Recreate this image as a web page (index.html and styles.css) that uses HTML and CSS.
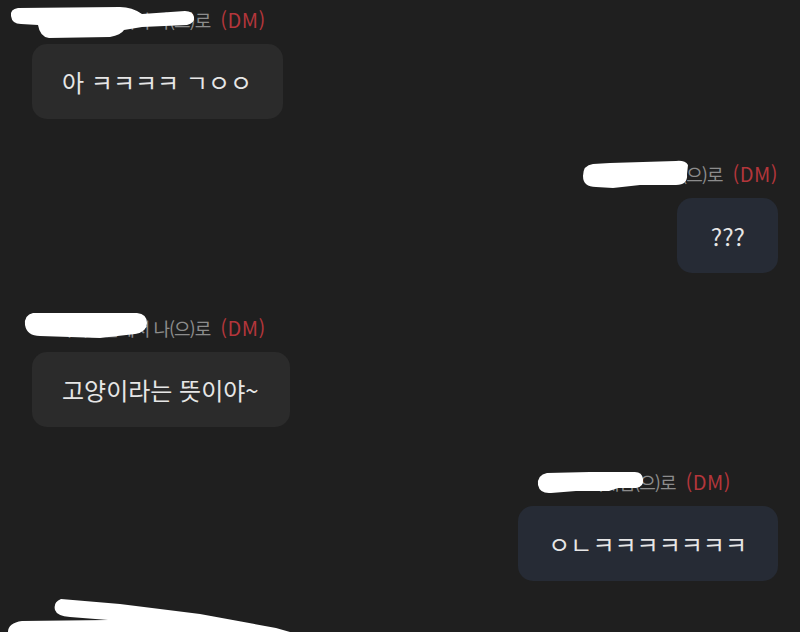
FILE: index.html
```html
<!DOCTYPE html>
<html lang="ko">
<head>
<meta charset="utf-8">
<link rel="stylesheet" href="styles.css">
</head>
<body>
<div class="page">
  <div class="thread">
    <div class="msg left">
      <div class="label"><span class="who">닉네임님께서 나(으)로</span><span class="dm">(DM)</span></div>
      <div class="bubble">아 ㅋㅋㅋㅋ ㄱㅇㅇ</div>
    </div>
    <div class="msg right">
      <div class="label"><span class="who">닉네임(으)로</span><span class="dm">(DM)</span></div>
      <div class="bubble narrow">???</div>
    </div>
    <div class="msg left">
      <div class="label"><span class="who">닉네임님께서 나(으)로</span><span class="dm">(DM)</span></div>
      <div class="bubble">고양이라는 뜻이야~</div>
    </div>
    <div class="msg right">
      <div class="label shifted"><span class="who">닉네임(으)로</span><span class="dm">(DM)</span></div>
      <div class="bubble">ㅇㄴㅋㅋㅋㅋㅋㅋㅋ</div>
    </div>
  </div>
  <svg class="redact" width="800" height="632" viewBox="0 0 800 632" xmlns="http://www.w3.org/2000/svg">
    <g fill="#fff">
      <path d="M18 8 Q10 9 11 16 Q12 24 21 24 L38 25 Q40 37 49 38 L110 37 Q121 35 124 30 L142 27 L187 25 Q195 23 194 17 Q193 11 185 11 L142 14 Q132 7 120 7 Z"/>
      <path d="M593 164 Q583 165 583 176 Q583 187 596 187 L613 188 L640 185 L676 185 Q688 185 687 174 L688 165 Q685 160 676 161 L610 163 Z"/>
      <path d="M33 313 Q24 315 25 325 Q27 336 40 336 L100 338 L135 334 Q147 332 147 323 Q147 314 137 313 L80 313 Z"/>
      <path d="M547 473 Q537 475 538 485 Q540 494 551 493 L576 491 L609 491 L618 488 L636 488 Q644 487 643 479 Q642 471 633 472 L590 472 Z"/>
      <path d="M61 599 Q53 602 55 610 Q57 616 70 617 L108 620 L22 621 Q8 623 8 632 L292 632 L290 632 L276 628 L200 614 L120 604 Z"/>
    </g>
  </svg>
</div>
</body>
</html>
```

FILE: styles.css
```css
html, body {
  margin: 0;
  padding: 0;
  background: #1f1f1f;
}

.page {
  position: relative;
  width: 800px;
  height: 632px;
  overflow: hidden;
  font-family: "Noto Sans CJK KR", "Noto Sans", sans-serif;
}

.thread {
  display: flex;
  flex-direction: column;
  gap: 43px;
  padding: 8px 22px 0 32px;
}

.msg {
  display: flex;
  flex-direction: column;
  gap: 12px;
}

.msg.left {
  align-items: flex-start;
}

.msg.right {
  align-items: flex-end;
}

.label {
  height: 24px;
  line-height: 24px;
  color: #8c8c8c;
  white-space: nowrap;
  display: flex;
  align-items: baseline;
  gap: 10px;
}

.who {
  font-size: 18px;
  letter-spacing: -1px;
}

.dm {
  font-size: 20px;
  letter-spacing: 0.5px;
  color: #b3363b;
}

.msg.left .label {
  margin-left: 24px;
}

.label.shifted {
  margin-right: 47px;
}

.bubble {
  height: 75px;
  box-sizing: border-box;
  padding: 0 31px 0 30px;
  display: flex;
  align-items: center;
  border-radius: 15px;
  font-size: 24px;
  color: #e6e6e6;
  white-space: nowrap;
}

.bubble.narrow {
  padding: 0 33px 0 34px;
}

.msg.left .bubble {
  background: #2b2b2b;
}

.msg.right .bubble {
  background: #262b35;
}

.redact {
  position: absolute;
  left: 0;
  top: 0;
  pointer-events: none;
}
```
